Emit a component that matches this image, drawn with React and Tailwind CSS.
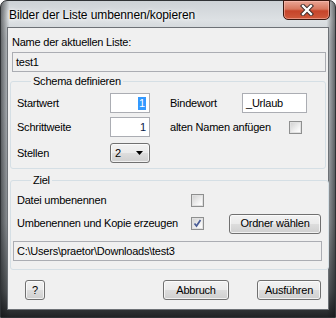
import React from "react";

const ui = "font-['Liberation_Sans',Arial,sans-serif] text-[11px] tracking-[-0.23px] text-black";

function TextBox({ children, className = "", align = "left", grey = false }) {
  return (
    <div
      className={`flex h-[20px] items-center border border-[#abadb3] px-[3px] ${
        grey ? "bg-[#f0f0f0]" : "bg-white"
      } ${align === "right" ? "justify-end" : "justify-start"} ${className}`}
    >
      {children}
    </div>
  );
}

function Checkbox({ checked = false }) {
  return (
    <div className="flex h-[13px] w-[13px] items-center justify-center border border-[#8e8f8f] bg-white">
      <div className="relative h-[11px] w-[11px] border border-[#e1e1e1] bg-[linear-gradient(135deg,#d4d4d4,#f4f4f4_70%,#ffffff)]">
        {checked && (
          <svg viewBox="0 0 11 11" className="absolute left-[-1px] top-[-1px] h-[11px] w-[11px]">
            <path d="M2.5 5.5 L4.5 8 L8.5 2" fill="none" stroke="#4a5d96" strokeWidth="1.7" />
          </svg>
        )}
      </div>
    </div>
  );
}

function Button({ children, className = "", between = false }) {
  return (
    <div
      className={`flex h-[20px] items-center rounded-[3px] border border-[#707070] bg-[linear-gradient(180deg,#f2f2f2_0%,#ebebeb_48%,#dddddd_52%,#cfcfcf_100%)] shadow-[inset_0_0_0_1px_rgba(255,255,255,0.7)] ${
        between ? "justify-between" : "justify-center"
      } ${className}`}
    >
      {children}
    </div>
  );
}

function GroupBox({ label, className = "", children }) {
  return (
    <fieldset className={`rounded-[3px] border border-[#d5dfe5] ${className}`}>
      <legend className="ml-[14px] px-[2px] leading-[16px]">{label}</legend>
      {children}
    </fieldset>
  );
}

export default function App() {
  return (
    <div className={`h-[318px] w-[336px] overflow-hidden bg-[#ffffff] ${ui}`}>
      <div className="flex h-[318px] w-[336px] flex-col rounded-t-[7px] border border-[#2f3235] bg-[linear-gradient(90deg,rgba(20,22,24,0.55)_0%,rgba(20,22,24,0)_2.5%,rgba(20,22,24,0)_97.5%,rgba(20,22,24,0.55)_100%),linear-gradient(180deg,#cdd2d6_0%,#dde1e4_6%,#c9ced2_12%,#bec3c8_35%,#9a9fa3_70%,#55595c_92%,#202224_100%)]">
        {/* Title bar */}
        <div className="flex h-[26px] shrink-0">
          <div className="pl-[8px] pt-[6px] text-[12px] leading-[16px] tracking-[-0.1px] [text-shadow:0_0_6px_#ffffff,0_0_3px_#ffffff]">
            Bilder der Liste umbennen/kopieren
          </div>
          <div className="ml-auto mr-[5px] mt-[-1px] flex h-[20px] w-[47px] items-center justify-center rounded-b-[5px] border border-[#3c1810] bg-[linear-gradient(180deg,#e9a595_0%,#d7775e_45%,#c6442a_55%,#cf5a3c_100%)] shadow-[inset_0_0_0_1px_rgba(255,200,190,0.5)]">
            <svg viewBox="0 0 14 12" className="h-[12px] w-[14px]">
              <path d="M3 2 L11 10 M11 2 L3 10" stroke="#3a2a28" strokeWidth="4.2" strokeLinecap="square" />
              <path d="M3 2 L11 10 M11 2 L3 10" stroke="#ffffff" strokeWidth="2.3" strokeLinecap="square" />
            </svg>
          </div>
        </div>

        {/* Client area */}
        <div className="ml-[6px] flex h-[283px] w-[322px] flex-col border border-[#6d7176] bg-[#f0f0f0]">
          <div className="pl-[4px] pt-[6px] leading-[16px]">Name der aktuellen Liste:</div>
          <TextBox grey className="ml-[4px] mt-[2px] w-[314px]">test1</TextBox>

          <GroupBox label="Schema definieren" className="ml-[2px] mt-[1px] w-[316px] px-[6px] pb-[5px]">
            <div className="mt-[4px] flex h-[20px] items-center">
              <div className="w-[93px]">Startwert</div>
              <TextBox align="right" className="w-[40px]">
                <span className="bg-[#3399ff] px-[1px] leading-[13px] text-white">1</span>
              </TextBox>
              <div className="ml-[20px] w-[72px]">Bindewort</div>
              <TextBox className="h-[19px] w-[65px]">_Urlaub</TextBox>
            </div>
            <div className="mt-[4px] flex h-[20px] items-center">
              <div className="w-[93px]">Schrittweite</div>
              <TextBox align="right" className="w-[40px] text-[#0a1a4a]">1</TextBox>
              <div className="ml-[20px] w-[119px]">alten Namen anfügen</div>
              <Checkbox />
            </div>
            <div className="mt-[6px] flex h-[20px] items-center">
              <div className="w-[93px]">Stellen</div>
              <Button between className="w-[40px] pl-[4px] pr-[6px]">
                <span>2</span>
                <svg viewBox="0 0 7 4" className="h-[4px] w-[7px]">
                  <path d="M0 0 H7 L3.5 4 Z" fill="#000000" />
                </svg>
              </Button>
            </div>
          </GroupBox>

          <GroupBox label="Ziel" className="ml-[2px] mt-[3px] w-[316px] px-[6px] pb-[8px]">
            <div className="mt-[2px] flex h-[20px] items-center">
              <div className="w-[174px]">Datei umbenennen</div>
              <Checkbox />
            </div>
            <div className="mt-[4px] flex h-[19px] items-center">
              <div className="w-[174px]">Umbenennen und Kopie erzeugen</div>
              <Checkbox checked />
              <Button className="ml-[25px] h-[19px] w-[92px]">Ordner wählen</Button>
            </div>
            <TextBox grey className="ml-[-4px] mt-[8px] w-[309px]">
              C:\Users\praetor\Downloads\test3
            </TextBox>
          </GroupBox>

          <div className="mt-[10px] flex items-center">
            <Button className="ml-[17px] w-[20px]">?</Button>
            <Button className="ml-[118px] w-[66px]">Abbruch</Button>
            <Button className="ml-[28px] w-[64px]">Ausführen</Button>
          </div>
        </div>
      </div>
    </div>
  );
}
